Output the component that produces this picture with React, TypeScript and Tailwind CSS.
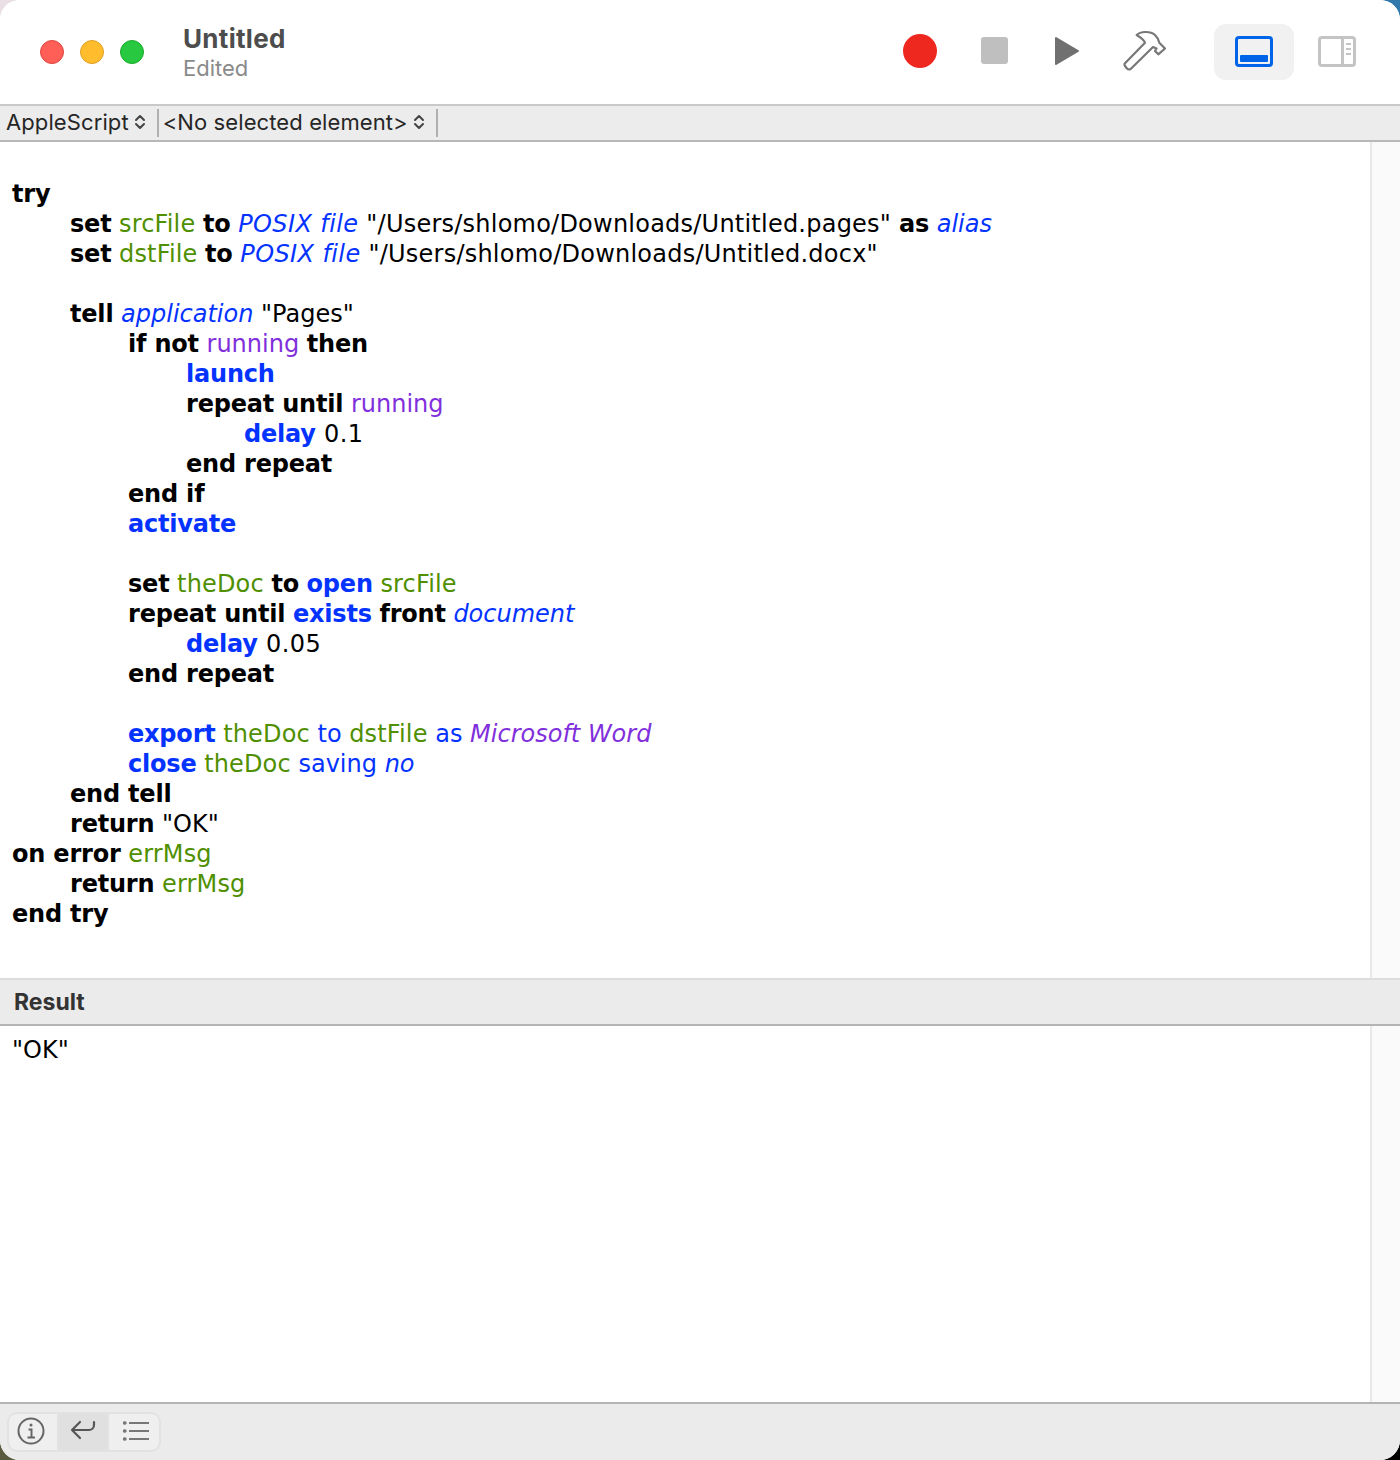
import React from 'react';

type Kind = 'k' | 'c' | 'v' | 'p' | 'e' | 'i' | 'f' | 't' | 'n' | 's' | 'd';
type Seg = [Kind, string];

const styles: Record<Kind, string> = {
  k: 'font-bold text-black tracking-[-0.2px]',
  c: 'font-bold text-[#0433ff] tracking-[-0.2px]',
  v: 'text-[#4f8f00] tracking-[0.15px]',
  p: 'text-[#812fdc]',
  e: 'italic text-[#812fdc]',
  i: 'italic text-[#0433ff]',
  f: 'italic text-[#0433ff] tracking-[0.4px]',
  t: 'text-[#0433ff]',
  n: 'text-black',
  s: 'text-black tracking-[0.23px]',
  d: 'text-black tracking-[0.5px]',
};

const code: { indent: number; segs: Seg[] }[] = [
  { indent: 0, segs: [['k', 'try']] },
  { indent: 1, segs: [['k', 'set'], ['n', ' '], ['v', 'srcFile'], ['n', ' '], ['k', 'to'], ['n', ' '], ['f', 'POSIX file'], ['s', ' "/Users/shlomo/Downloads/Untitled.pages" '], ['k', 'as'], ['n', ' '], ['i', 'alias']] },
  { indent: 1, segs: [['k', 'set'], ['n', ' '], ['v', 'dstFile'], ['n', ' '], ['k', 'to'], ['n', ' '], ['f', 'POSIX file'], ['s', ' "/Users/shlomo/Downloads/Untitled.docx"']] },
  { indent: 0, segs: [] },
  { indent: 1, segs: [['k', 'tell'], ['n', ' '], ['i', 'application'], ['n', ' "Pages"']] },
  { indent: 2, segs: [['k', 'if not'], ['n', ' '], ['p', 'running'], ['n', ' '], ['k', 'then']] },
  { indent: 3, segs: [['c', 'launch']] },
  { indent: 3, segs: [['k', 'repeat until'], ['n', ' '], ['p', 'running']] },
  { indent: 4, segs: [['c', 'delay'], ['d', ' 0.1']] },
  { indent: 3, segs: [['k', 'end repeat']] },
  { indent: 2, segs: [['k', 'end if']] },
  { indent: 2, segs: [['c', 'activate']] },
  { indent: 0, segs: [] },
  { indent: 2, segs: [['k', 'set'], ['n', ' '], ['v', 'theDoc'], ['n', ' '], ['k', 'to'], ['n', ' '], ['c', 'open'], ['n', ' '], ['v', 'srcFile']] },
  { indent: 2, segs: [['k', 'repeat until'], ['n', ' '], ['c', 'exists'], ['n', ' '], ['k', 'front'], ['n', ' '], ['i', 'document']] },
  { indent: 3, segs: [['c', 'delay'], ['d', ' 0.05']] },
  { indent: 2, segs: [['k', 'end repeat']] },
  { indent: 0, segs: [] },
  { indent: 2, segs: [['c', 'export'], ['n', ' '], ['v', 'theDoc'], ['n', ' '], ['t', 'to'], ['n', ' '], ['v', 'dstFile'], ['n', ' '], ['t', 'as'], ['n', ' '], ['e', 'Microsoft Word']] },
  { indent: 2, segs: [['c', 'close'], ['n', ' '], ['v', 'theDoc'], ['n', ' '], ['t', 'saving'], ['n', ' '], ['i', 'no']] },
  { indent: 1, segs: [['k', 'end tell']] },
  { indent: 1, segs: [['k', 'return'], ['n', ' "OK"']] },
  { indent: 0, segs: [['k', 'on error'], ['n', ' '], ['v', 'errMsg']] },
  { indent: 1, segs: [['k', 'return'], ['n', ' '], ['v', 'errMsg']] },
  { indent: 0, segs: [['k', 'end try']] },
];

const indents = ['pl-0', 'pl-[58px]', 'pl-[116px]', 'pl-[174px]', 'pl-[232px]'];

function Updown() {
  return (
    <svg width="12" height="18" viewBox="0 0 12 18" fill="none" stroke="#444" strokeWidth="2" strokeLinecap="round" strokeLinejoin="round">
      <path d="M2 7 6 3l4 4M2 11l4 4 4-4" />
    </svg>
  );
}

export default function App() {
  return (
    <div className="w-[1400px] h-[1460px] overflow-hidden bg-[conic-gradient(#2f79ad_0_25%,#000000_25%_50%,#5a5a40_50%_75%,#eadfe4_75%)] font-['Inter',sans-serif]">
      <div className="flex h-full flex-col overflow-hidden rounded-[20px] bg-white">
        {/* title bar */}
        <div className="flex h-[104px] items-center bg-white pl-10 pr-11">
          <div className="flex gap-4">
            <span className="size-6 rounded-full border border-[#e0443e] bg-[#ff5f57]" />
            <span className="size-6 rounded-full border border-[#dea123] bg-[#ffbd2e]" />
            <span className="size-6 rounded-full border border-[#1aab29] bg-[#28c840]" />
          </div>
          <div className="ml-[39px] flex flex-col pt-[2px]">
            <span className="text-[26px] leading-[30px] font-bold tracking-[0.3px] text-[#4d4d4d]">Untitled</span>
            <span className="text-[22px] leading-[28px] text-[#8a8a8a]">Edited</span>
          </div>
          <div className="ml-auto flex items-center">
            <span className="-mt-[2px] size-[34px] rounded-full bg-[#ee281f]" />
            <span className="ml-[44px] -mt-[3px] size-[27px] rounded-[3px] bg-[#bfbfbf]" />
            <svg className="ml-[46px] -mt-[3px]" width="26" height="30" viewBox="0 0 26 30">
              <path d="M2 2 L24 15 L2 28 Z" fill="#707070" stroke="#707070" strokeWidth="2" strokeLinejoin="round" />
            </svg>
            <svg className="ml-[42px] -mt-[2px]" width="44" height="42" viewBox="0 0 44 42" fill="none" stroke="#777" strokeWidth="2.2" strokeLinejoin="round">
              <path d="M3 33.3 23 12.7C22 10 18 7 14.7 5 18 1.5 28 .5 33 5c2 2 4 5 4.3 7.7l5.7 5.8-6.7 5.8-3.3-3.3 1.5-2.5-3.5-1.5L8.7 39q-2.2 1-3.7-.5L3 36q-1-1.5 0-2.7Z" />
            </svg>
            <div className="ml-[48px] flex h-14 w-20 items-center justify-center rounded-xl bg-[#f1f1f1]">
              <div className="-mt-[2px] flex h-[31px] w-[38px] flex-col justify-end rounded-[4px] border-[3px] border-[#0064e8] p-[2px]">
                <div className="h-[7px] rounded-[1px] bg-[#0064e8]" />
              </div>
            </div>
            <div className="ml-[24px] -mt-[2px] flex h-[31px] w-[38px] justify-end rounded-[4px] border-[3px] border-[#c4c4c4]">
              <div className="flex w-[12px] flex-col items-center gap-[3px] border-l-[3px] border-[#c4c4c4] pt-[4px]">
                <div className="h-[2px] w-[5px] bg-[#c4c4c4]" />
                <div className="h-[2px] w-[5px] bg-[#c4c4c4]" />
                <div className="h-[2px] w-[5px] bg-[#c4c4c4]" />
              </div>
            </div>
          </div>
        </div>

        {/* navigation bar */}
        <div className="flex h-[38px] items-center border-y-2 border-t-[#c8c8c8] border-b-[#b8b8b8] bg-[#ececec] text-[22px] tracking-[0.1px] text-[#262626]">
          <span className="ml-[6px] -mt-[2px]">AppleScript</span>
          <span className="ml-[5px] -mt-[2px]"><Updown /></span>
          <div className="ml-[11px] h-7 w-0.5 bg-[#b0b0b0]" />
          <span className="ml-[4px] -mt-[2px]">&lt;No selected element&gt;</span>
          <span className="ml-[5px] -mt-[2px]"><Updown /></span>
          <div className="ml-[11px] h-7 w-0.5 bg-[#b0b0b0]" />
        </div>

        {/* script editor */}
        <div className="flex h-[836px]">
          <div className="flex-1 pt-[37px] pl-3 font-['DejaVu_Sans',sans-serif] text-[24px] leading-[30px] whitespace-pre">
            {code.map((line, i) => (
              <div key={i} className={`h-[30px] ${indents[line.indent]}`}>
                {line.segs.map((s, j) => (
                  <span key={j} className={styles[s[0]]}>{s[1]}</span>
                ))}
              </div>
            ))}
          </div>
          <div className="w-[30px] border-l-2 border-[#e8e8e8] bg-[#fafafa]" />
        </div>

        {/* result header */}
        <div className="flex h-[48px] items-center border-t-2 border-b-2 border-t-[#dcdcdc] border-b-[#b4b4b4] bg-[#ebebeb] pl-[14px] text-[23px] font-bold text-[#333]">
          Result
        </div>

        {/* result pane */}
        <div className="flex flex-1">
          <div className="flex-1 pt-[9px] pl-3 font-['DejaVu_Sans',sans-serif] text-[24px] leading-[30px] text-black">"OK"</div>
          <div className="w-[30px] border-l-2 border-[#e8e8e8] bg-[#fafafa]" />
        </div>

        {/* bottom bar */}
        <div className="flex h-[58px] items-center border-t-2 border-t-[#b4b4b4] bg-[#ebebeb] pl-[7px]">
          <div className="flex h-10 overflow-hidden rounded-[10px] border-2 border-[#e2e2e2] bg-[#efefef]">
            <div className="flex w-[48px] items-center justify-center pr-[5px] pb-[2px]">
              <svg width="28" height="28" viewBox="0 0 28 28" fill="none" stroke="#666" strokeWidth="2">
                <circle cx="14" cy="14" r="12.5" />
                <circle cx="14" cy="8" r="1.5" fill="#666" stroke="none" />
                <path d="M11.5 12.5H14.5V20M10.5 20.5h7.5" />
              </svg>
            </div>
            <div className="flex w-[52px] items-center justify-center border-x-2 border-[#e2e2e2] bg-[#e0e0e0] pb-[2px]">
              <svg width="26" height="22" viewBox="0 0 26 22" fill="none" stroke="#555" strokeWidth="2.2" strokeLinecap="round" strokeLinejoin="round">
                <path d="M24 2v3a5 5 0 0 1-5 5H2M10 2 2 10l8 8" />
              </svg>
            </div>
            <div className="flex w-[50px] items-center justify-center pl-[5px] pb-[2px]">
              <svg width="28" height="22" viewBox="0 0 28 22" fill="none" stroke="#777" strokeWidth="2">
                <path d="M6 3h20M6 11h20M6 19h20" />
                <path d="M1.5 3h.5M1.5 11h.5M1.5 19h.5" strokeLinecap="round" strokeWidth="3.4" />
              </svg>
            </div>
          </div>
        </div>
      </div>
    </div>
  );
}
